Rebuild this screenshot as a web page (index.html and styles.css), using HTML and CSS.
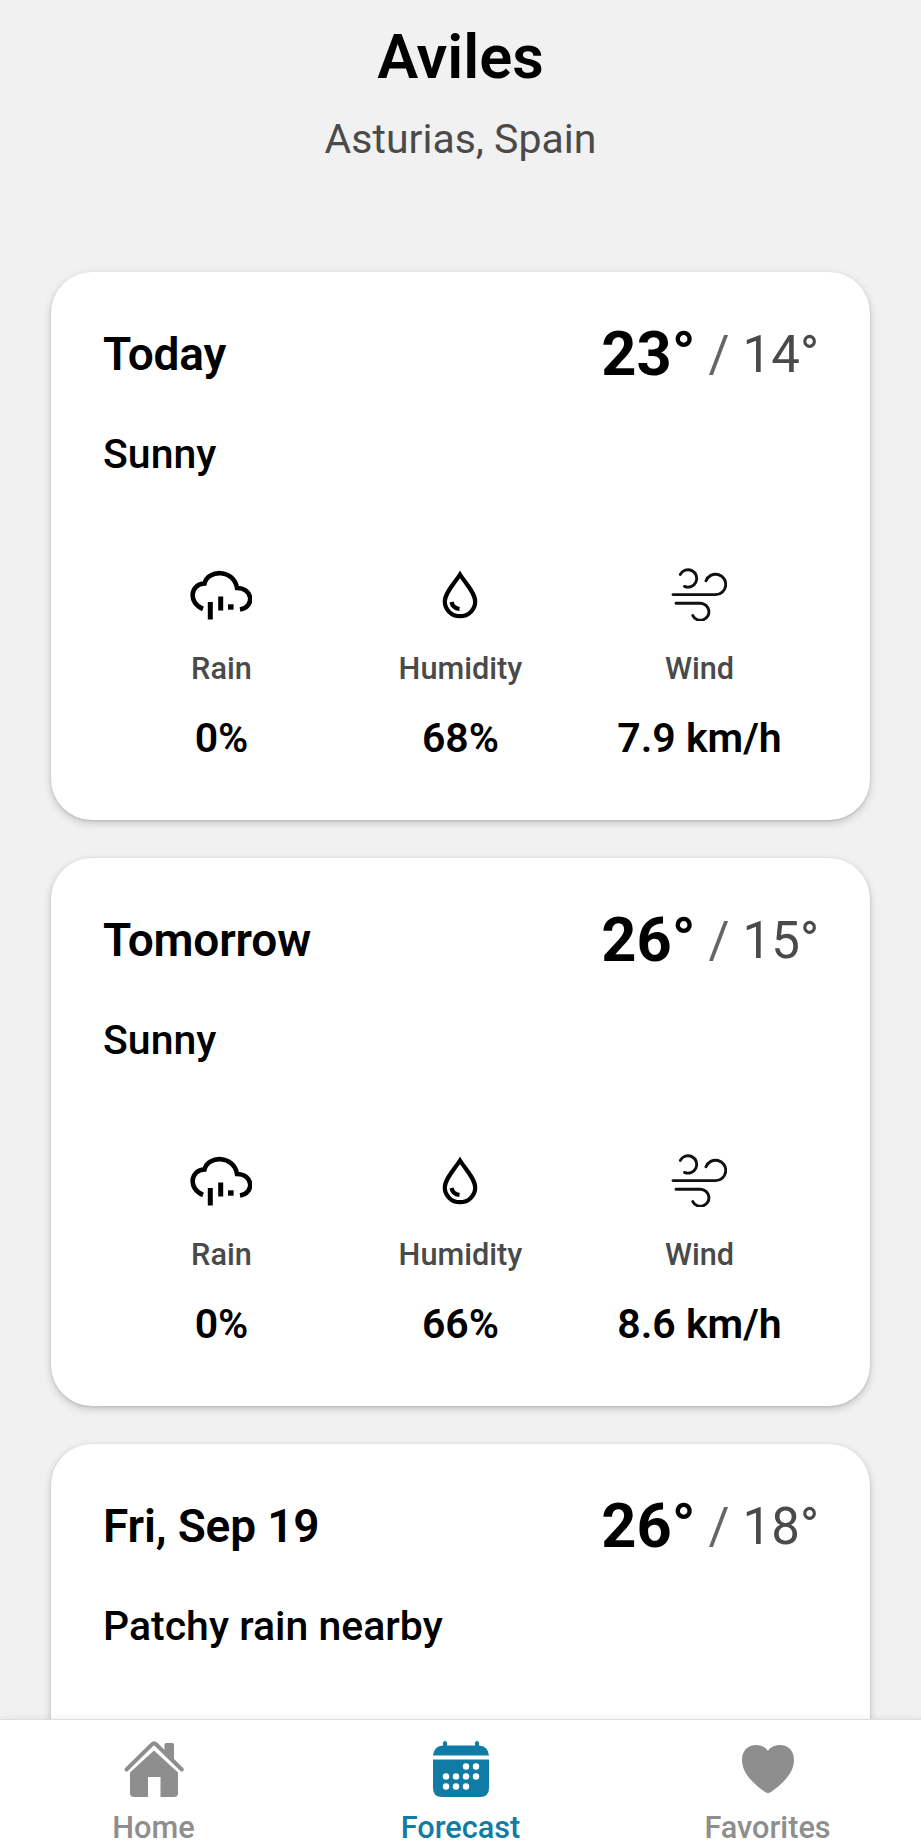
FILE: index.html
```html
<!DOCTYPE html>
<html lang="en">
<head>
<meta charset="utf-8">
<title>Forecast</title>
<link rel="stylesheet" href="styles.css">
</head>
<body>
<svg class="sprite" aria-hidden="true">
  <symbol id="rain" viewBox="0 0 62 50" fill="none" stroke="#000">
    <path d="M13 39C-2 33 0 14 14.500 13.500C18-1 44-1 47 18C63 18 65 37 50 39.500" stroke-width="4.600"/>
    <path d="M20.300 32v17.500M30.700 26.500v14" stroke-width="5"/>
    <path d="M38 37h5.600" stroke-width="5.400"/>
  </symbol>
  <symbol id="drop" viewBox="0 0 36 48" fill="none" stroke="#000">
    <path d="M18 3.500C12 13 2.800 22 2.800 30.500a15.200 14.700 0 0 0 30.400 0C33.200 22 24 13 18 3.500Z" stroke-width="4.200"/>
    <path d="M9.500 31c.8 4 4 6.500 8 7" stroke-width="4.200"/>
  </symbol>
  <symbol id="wind" viewBox="0 0 56 54" fill="none" stroke="#111" stroke-width="2.900" stroke-linecap="round">
    <path d="M9.300 7.400a8.700 8.700 0 1 1 4.200 12"/>
    <path d="M2 27.600h42.500A10.200 10.200 0 1 0 35 13.800"/>
    <path d="M5 36.300h24.500a8.500 8.500 0 1 1-7.700 12.300"/>
  </symbol>
</svg>
<div class="app">
  <main class="content">
    <header class="place">
      <h1 class="city">Aviles</h1>
      <p class="region">Asturias, Spain</p>
    </header>
    <section class="days">
      <article class="card">
        <div class="card-head">
          <h2 class="day">Today</h2>
          <div class="temps"><span class="high">23°</span><span class="slash">/</span><span class="low">14°</span></div>
        </div>
        <p class="summary">Sunny</p>
        <div class="stats">
          <div class="stat"><svg class="icon rain"><use href="#rain"/></svg><span class="label">Rain</span><span class="value">0%</span></div>
          <div class="stat"><svg class="icon drop"><use href="#drop"/></svg><span class="label">Humidity</span><span class="value">68%</span></div>
          <div class="stat"><svg class="icon wind"><use href="#wind"/></svg><span class="label">Wind</span><span class="value">7.9 km/h</span></div>
        </div>
      </article>
      <article class="card">
        <div class="card-head">
          <h2 class="day">Tomorrow</h2>
          <div class="temps"><span class="high">26°</span><span class="slash">/</span><span class="low">15°</span></div>
        </div>
        <p class="summary">Sunny</p>
        <div class="stats">
          <div class="stat"><svg class="icon rain"><use href="#rain"/></svg><span class="label">Rain</span><span class="value">0%</span></div>
          <div class="stat"><svg class="icon drop"><use href="#drop"/></svg><span class="label">Humidity</span><span class="value">66%</span></div>
          <div class="stat"><svg class="icon wind"><use href="#wind"/></svg><span class="label">Wind</span><span class="value">8.6 km/h</span></div>
        </div>
      </article>
      <article class="card">
        <div class="card-head">
          <h2 class="day">Fri, Sep 19</h2>
          <div class="temps"><span class="high">26°</span><span class="slash">/</span><span class="low">18°</span></div>
        </div>
        <p class="summary">Patchy rain nearby</p>
      </article>
    </section>
  </main>
  <nav class="tabs">
    <a class="tab">
      <svg class="tab-icon" viewBox="0 0 62 62" fill="currentColor">
        <path d="M41.500 5.500q0-1.500 1.500-1.500h6.500q1.500 0 1.500 1.500V22L41.500 13Z"/>
        <path d="M31 11.500 55 33.500V54q0 4-4 4H37.500V38H25v20H11q-4 0-4-4V33.500Z"/>
        <path d="M3.500 30.500 29 5.300q2-1.900 4 0L58.800 30.500" fill="none" stroke="currentColor" stroke-width="4" stroke-linecap="round"/>
      </svg>
      <span class="tab-label">Home</span>
    </a>
    <a class="tab active">
      <svg class="tab-icon" viewBox="0 0 62 62" fill="currentColor">
        <path d="M3 16.500Q4 7 13 6.500V4q0-2 2-2t2 2v2.500h28V4q0-2 2-2t2 2v2.500Q58 7 59 16.500Z"/>
        <path d="M3 20.500h56V49q0 9-9 9H12q-9 0-9-9Z"/>
        <g fill="#fff"><circle cx="36" cy="27.500" r="3.200"/><circle cx="46" cy="27.500" r="3.200"/><circle cx="16" cy="37.500" r="3.200"/><circle cx="26" cy="37.500" r="3.200"/><circle cx="36" cy="37.500" r="3.200"/><circle cx="46" cy="37.500" r="3.200"/><circle cx="16" cy="47.500" r="3.200"/><circle cx="26" cy="47.500" r="3.200"/><circle cx="36" cy="47.500" r="3.200"/></g>
      </svg>
      <span class="tab-label">Forecast</span>
    </a>
    <a class="tab">
      <svg class="tab-icon" viewBox="0 0 62 62" fill="currentColor">
        <path d="M31 12C26 3 5 3 5 21C5 35 18 46 28 53Q31 55 34 53C44 46 57 35 57 21C57 3 36 3 31 12Z"/>
      </svg>
      <span class="tab-label">Favorites</span>
    </a>
  </nav>
</div>
</body>
</html>
```
FILE: styles.css
```css
* { box-sizing: border-box; margin: 0; }
body {
  background: #f1f1f1;
  color: #000;
  font-family: Roboto, sans-serif;
}
.sprite { display: none; }
.app {
  display: flex;
  flex-direction: column;
  height: 1843px;
  overflow: hidden;
}
.content {
  flex: 1;
  min-height: 0;
  overflow: hidden;
  padding: 21px 51px 0;
}
.place { text-align: center; padding-bottom: 109px; }
.city { font-size: 61.4px; line-height: 72px; font-weight: 600; }
.region { margin-top: 22px; font-size: 41px; line-height: 48px; color: #4a4a4a; }
.days { display: flex; flex-direction: column; gap: 38px; }
.card {
  height: 548px;
  padding: 51px 51px 51px 52px;
  border-radius: 41px;
  background: #fff;
  box-shadow: 0 3px 9px rgba(0, 0, 0, .18), 0 1px 3px rgba(0, 0, 0, .12);
}
.card-head {
  display: flex;
  justify-content: space-between;
  align-items: center;
  height: 62px;
}
.day { font-size: 46px; line-height: 54px; font-weight: 600; letter-spacing: -.15px; }
.temps { display: flex; align-items: center; line-height: 62px; color: #4a4a4a; }
.high { font-size: 61.4px; font-weight: 700; color: #000; }
.slash { margin: 0 13px; padding-top: 1px; font-size: 51px; color: #666; }
.low { padding-top: 1px; font-size: 51px; }
.summary { margin-top: 45px; font-size: 41px; line-height: 48px; font-weight: 500; }
.stats {
  display: grid;
  grid-template-columns: repeat(3, 1fr);
  margin: 85px 0 0 -1px;
}
.stat { display: flex; flex-direction: column; align-items: center; }
.icon { height: 62px; margin-right: 1px; padding: 7px 0 5px; }
.rain { width: 62px; }
.drop { width: 36px; }
.wind { width: 56px; padding: 4px 0; }
.label { margin-top: 26px; font-size: 30.7px; line-height: 36px; font-weight: 500; color: #4a4a4a; }
.value { margin-top: 27px; font-size: 41px; line-height: 48px; font-weight: 600; }
.tabs {
  display: grid;
  grid-template-columns: repeat(3, 1fr);
  height: 124px;
  padding-top: 19px;
  border-top: 1px solid #dedede;
  background: #fff;
  box-shadow: 0 0 8px rgba(0, 0, 0, .08);
  position: relative;
}
.tab { display: flex; flex-direction: column; align-items: center; color: #8e8e8e; }
.tab.active { color: #107ca5; }
.tab-icon { width: 62px; height: 62px; }
.tab-label { margin-top: 12px; font-size: 30.7px; line-height: 30px; font-weight: 500; }
```
